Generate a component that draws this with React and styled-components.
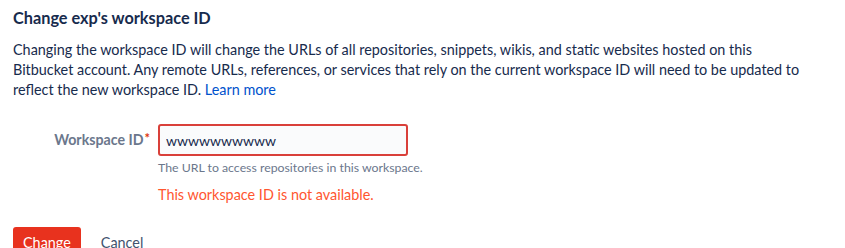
import React from "react";
import styled, { createGlobalStyle } from "styled-components";

const GlobalStyles = createGlobalStyle`
  body {
    margin: 0;
    background: #fff;
    font-family: Lato, "Noto Sans", sans-serif;
    color: #172b4d;
    -webkit-font-smoothing: antialiased;
  }
`;

const Page = styled.div`
  width: 799px;
  padding: 8px 0 0 13px;
`;

const Heading = styled.h2`
  margin: 0;
  font-size: 16.3px;
  line-height: 20px;
  font-weight: 700;
  color: #172b4d;
`;

const Description = styled.p`
  margin: 12px 0 0;
  font-size: 14.4px;
  line-height: 20px;
  color: #172b4d;
`;

const Link = styled.a`
  color: #0052cc;
  text-decoration: none;
`;

const FieldRow = styled.div`
  display: grid;
  grid-template-columns: 137px auto;
  column-gap: 8px;
  margin-top: 24px;
`;

const Label = styled.label`
  justify-self: end;
  padding-top: 6px;
  font-size: 14.2px;
  line-height: 20px;
  font-weight: 700;
  color: #6b778c;
`;

const Required = styled.span`
  color: #de350b;
  font-size: 13px;
  font-weight: 700;
  vertical-align: top;
  line-height: 16px;
  margin-left: 1px;
`;

const FieldBody = styled.div`
  display: flex;
  flex-direction: column;
  align-items: flex-start;
`;

const Input = styled.input`
  box-sizing: border-box;
  width: 250px;
  height: 32px;
  padding: 0 6px;
  border: 2px solid ${(p) => (p.invalid ? "#d9403a" : "#dfe1e6")};
  border-radius: 3px;
  background: #fafbfc;
  font-family: inherit;
  font-size: 14px;
  color: #172b4d;
  outline: none;
`;

const HelpText = styled.div`
  margin-top: 4px;
  font-size: 12.3px;
  line-height: 16px;
  color: #6b778c;
`;

const ErrorText = styled.div`
  margin-top: 9px;
  font-size: 14.4px;
  line-height: 20px;
  color: #ff5630;
`;

const Actions = styled.div`
  display: flex;
  gap: 10px;
  margin-top: 22px;
`;

const Button = styled.button`
  height: 32px;
  padding: 0 10px;
  border: none;
  border-radius: 3px;
  font-family: inherit;
  font-size: 14.4px;
  line-height: 32px;
  cursor: pointer;
  background: ${(p) => (p.primary ? "#e8321e" : "transparent")};
  color: ${(p) => (p.primary ? "#fff" : "#42526e")};
`;

export default function App() {
  return (
    <Page>
      <GlobalStyles />
      <Heading>Change exp's workspace ID</Heading>
      <Description>
        Changing the workspace ID will change the URLs of all repositories,
        snippets, wikis, and static websites hosted on this Bitbucket account.
        Any remote URLs, references, or services that rely on the current
        workspace ID will need to be updated to reflect the new workspace ID.{" "}
        <Link href="#">Learn more</Link>
      </Description>
      <FieldRow>
        <Label>
          Workspace ID<Required>*</Required>
        </Label>
        <FieldBody>
          <Input invalid defaultValue="wwwwwwwwww" />
          <HelpText>The URL to access repositories in this workspace.</HelpText>
          <ErrorText>This workspace ID is not available.</ErrorText>
        </FieldBody>
      </FieldRow>
      <Actions>
        <Button primary>Change</Button>
        <Button>Cancel</Button>
      </Actions>
    </Page>
  );
}
